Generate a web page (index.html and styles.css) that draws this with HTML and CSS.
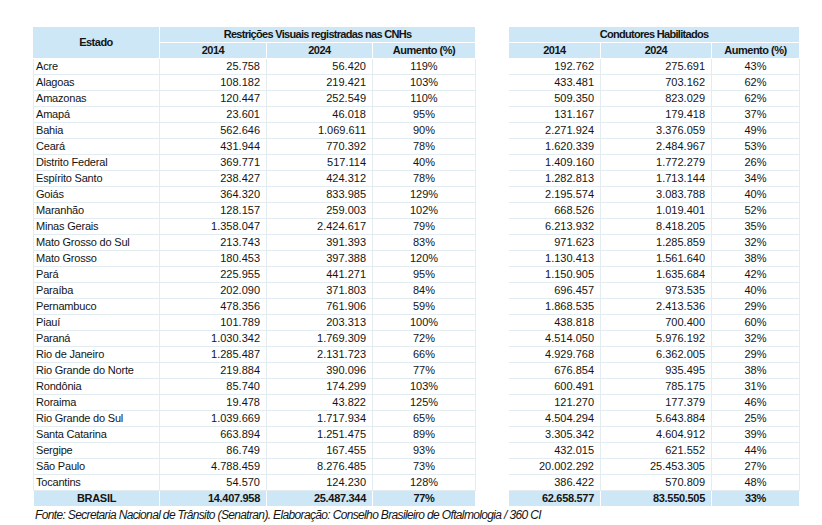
FILE: index.html
```html
<!DOCTYPE html>
<html lang="pt-BR">
<head>
<meta charset="utf-8">
<title>Restrições Visuais registradas nas CNHs</title>
<link rel="stylesheet" href="styles.css">
</head>
<body>
<div class="page">
<table class="data">
  <colgroup>
    <col class="c-estado"><col class="c-a14"><col class="c-a24"><col class="c-aum">
    <col class="c-gap">
    <col class="c-b14"><col class="c-b24"><col class="c-bum">
  </colgroup>
  <thead>
    <tr class="h1">
      <th rowspan="2" class="hd">Estado</th>
      <th colspan="3" class="hd">Restrições Visuais registradas nas CNHs</th>
      <th class="gap"></th>
      <th colspan="3" class="hd">Condutores Habilitados</th>
    </tr>
    <tr class="h2">
      <th class="hd">2014</th><th class="hd">2024</th><th class="hd">Aumento (%)</th>
      <th class="gap"></th>
      <th class="hd">2014</th><th class="hd">2024</th><th class="hd">Aumento (%)</th>
    </tr>
  </thead>
  <tbody>
    <tr><td class="st">Acre</td><td class="n">25.758</td><td class="n">56.420</td><td class="p">119%</td><td class="gap"></td><td class="n">192.762</td><td class="n">275.691</td><td class="p">43%</td></tr>
    <tr><td class="st">Alagoas</td><td class="n">108.182</td><td class="n">219.421</td><td class="p">103%</td><td class="gap"></td><td class="n">433.481</td><td class="n">703.162</td><td class="p">62%</td></tr>
    <tr><td class="st">Amazonas</td><td class="n">120.447</td><td class="n">252.549</td><td class="p">110%</td><td class="gap"></td><td class="n">509.350</td><td class="n">823.029</td><td class="p">62%</td></tr>
    <tr><td class="st">Amapá</td><td class="n">23.601</td><td class="n">46.018</td><td class="p">95%</td><td class="gap"></td><td class="n">131.167</td><td class="n">179.418</td><td class="p">37%</td></tr>
    <tr><td class="st">Bahia</td><td class="n">562.646</td><td class="n">1.069.611</td><td class="p">90%</td><td class="gap"></td><td class="n">2.271.924</td><td class="n">3.376.059</td><td class="p">49%</td></tr>
    <tr><td class="st">Ceará</td><td class="n">431.944</td><td class="n">770.392</td><td class="p">78%</td><td class="gap"></td><td class="n">1.620.339</td><td class="n">2.484.967</td><td class="p">53%</td></tr>
    <tr><td class="st">Distrito Federal</td><td class="n">369.771</td><td class="n">517.114</td><td class="p">40%</td><td class="gap"></td><td class="n">1.409.160</td><td class="n">1.772.279</td><td class="p">26%</td></tr>
    <tr><td class="st">Espírito Santo</td><td class="n">238.427</td><td class="n">424.312</td><td class="p">78%</td><td class="gap"></td><td class="n">1.282.813</td><td class="n">1.713.144</td><td class="p">34%</td></tr>
    <tr><td class="st">Goiás</td><td class="n">364.320</td><td class="n">833.985</td><td class="p">129%</td><td class="gap"></td><td class="n">2.195.574</td><td class="n">3.083.788</td><td class="p">40%</td></tr>
    <tr><td class="st">Maranhão</td><td class="n">128.157</td><td class="n">259.003</td><td class="p">102%</td><td class="gap"></td><td class="n">668.526</td><td class="n">1.019.401</td><td class="p">52%</td></tr>
    <tr><td class="st">Minas Gerais</td><td class="n">1.358.047</td><td class="n">2.424.617</td><td class="p">79%</td><td class="gap"></td><td class="n">6.213.932</td><td class="n">8.418.205</td><td class="p">35%</td></tr>
    <tr><td class="st">Mato Grosso do Sul</td><td class="n">213.743</td><td class="n">391.393</td><td class="p">83%</td><td class="gap"></td><td class="n">971.623</td><td class="n">1.285.859</td><td class="p">32%</td></tr>
    <tr><td class="st">Mato Grosso</td><td class="n">180.453</td><td class="n">397.388</td><td class="p">120%</td><td class="gap"></td><td class="n">1.130.413</td><td class="n">1.561.640</td><td class="p">38%</td></tr>
    <tr><td class="st">Pará</td><td class="n">225.955</td><td class="n">441.271</td><td class="p">95%</td><td class="gap"></td><td class="n">1.150.905</td><td class="n">1.635.684</td><td class="p">42%</td></tr>
    <tr><td class="st">Paraíba</td><td class="n">202.090</td><td class="n">371.803</td><td class="p">84%</td><td class="gap"></td><td class="n">696.457</td><td class="n">973.535</td><td class="p">40%</td></tr>
    <tr><td class="st">Pernambuco</td><td class="n">478.356</td><td class="n">761.906</td><td class="p">59%</td><td class="gap"></td><td class="n">1.868.535</td><td class="n">2.413.536</td><td class="p">29%</td></tr>
    <tr><td class="st">Piauí</td><td class="n">101.789</td><td class="n">203.313</td><td class="p">100%</td><td class="gap"></td><td class="n">438.818</td><td class="n">700.400</td><td class="p">60%</td></tr>
    <tr><td class="st">Paraná</td><td class="n">1.030.342</td><td class="n">1.769.309</td><td class="p">72%</td><td class="gap"></td><td class="n">4.514.050</td><td class="n">5.976.192</td><td class="p">32%</td></tr>
    <tr><td class="st">Rio de Janeiro</td><td class="n">1.285.487</td><td class="n">2.131.723</td><td class="p">66%</td><td class="gap"></td><td class="n">4.929.768</td><td class="n">6.362.005</td><td class="p">29%</td></tr>
    <tr><td class="st">Rio Grande do Norte</td><td class="n">219.884</td><td class="n">390.096</td><td class="p">77%</td><td class="gap"></td><td class="n">676.854</td><td class="n">935.495</td><td class="p">38%</td></tr>
    <tr><td class="st">Rondônia</td><td class="n">85.740</td><td class="n">174.299</td><td class="p">103%</td><td class="gap"></td><td class="n">600.491</td><td class="n">785.175</td><td class="p">31%</td></tr>
    <tr><td class="st">Roraima</td><td class="n">19.478</td><td class="n">43.822</td><td class="p">125%</td><td class="gap"></td><td class="n">121.270</td><td class="n">177.379</td><td class="p">46%</td></tr>
    <tr><td class="st">Rio Grande do Sul</td><td class="n">1.039.669</td><td class="n">1.717.934</td><td class="p">65%</td><td class="gap"></td><td class="n">4.504.294</td><td class="n">5.643.884</td><td class="p">25%</td></tr>
    <tr><td class="st">Santa Catarina</td><td class="n">663.894</td><td class="n">1.251.475</td><td class="p">89%</td><td class="gap"></td><td class="n">3.305.342</td><td class="n">4.604.912</td><td class="p">39%</td></tr>
    <tr><td class="st">Sergipe</td><td class="n">86.749</td><td class="n">167.455</td><td class="p">93%</td><td class="gap"></td><td class="n">432.015</td><td class="n">621.552</td><td class="p">44%</td></tr>
    <tr><td class="st">São Paulo</td><td class="n">4.788.459</td><td class="n">8.276.485</td><td class="p">73%</td><td class="gap"></td><td class="n">20.002.292</td><td class="n">25.453.305</td><td class="p">27%</td></tr>
    <tr><td class="st">Tocantins</td><td class="n">54.570</td><td class="n">124.230</td><td class="p">128%</td><td class="gap"></td><td class="n">386.422</td><td class="n">570.809</td><td class="p">48%</td></tr>
    <tr class="total"><td class="st tt">BRASIL</td><td class="n">14.407.958</td><td class="n">25.487.344</td><td class="p">77%</td><td class="gap"></td><td class="n">62.658.577</td><td class="n">83.550.505</td><td class="p">33%</td></tr>
  </tbody>
</table>
<p class="source">Fonte: Secretaria Nacional de Trânsito (Senatran). Elaboração: Conselho Brasileiro de Oftalmologia / 360 CI</p>
</div>
</body>
</html>
```
FILE: styles.css
```css
html, body {
  margin: 0;
  padding: 0;
  background: #ffffff;
}

.page {
  padding: 27px 0 0 33px;
  font-family: "Liberation Sans Narrow", "Arial Narrow", "Liberation Sans", Arial, sans-serif;
  color: #141414;
}

.data {
  border-collapse: separate;
  border-spacing: 0;
  table-layout: fixed;
  width: 767px;
  font-size: 11px;
}

.c-estado { width: 127px; }
.c-a14 { width: 107px; }
.c-a24 { width: 106px; }
.c-aum { width: 103px; }
.c-gap { width: 33px; }
.c-b14 { width: 92px; }
.c-b24 { width: 111px; }
.c-bum { width: 88px; }

.data th,
.data td {
  padding: 0;
  white-space: nowrap;
  overflow: hidden;
  line-height: 15px;
  height: 15px;
}

.hd {
  background: #cde7f6;
  font-weight: bold;
  text-align: center;
  letter-spacing: -0.5px;
  border-right: 1px solid #ffffff;
  border-bottom: 1px solid #ffffff;
}

.h1 .hd[colspan] {
  letter-spacing: -0.7px;
}

.data td {
  border-bottom: 1px solid #e2ecf1;
  border-right: 1px solid #e2ecf1;
}

.data td.gap,
.data th.gap {
  border: none;
  background: #ffffff;
}

.data td.st {
  border-left: 1px solid #e2ecf1;
  padding-left: 2px;
  text-align: left;
  letter-spacing: -0.2px;
}

.data td.n {
  text-align: right;
  padding-right: 6px;
}

.data td.p {
  text-align: center;
}

.data tr.total td {
  background: #cde7f6;
  font-weight: bold;
  border-color: #ffffff;
  letter-spacing: -0.3px;
}

.data tr.total td.gap {
  background: #ffffff;
}

.data td.tt {
  text-align: center;
  padding-left: 0;
}

.source {
  margin: 1px 0 0 2px;
  font-size: 12px;
  font-style: italic;
  letter-spacing: -0.65px;
  color: #141414;
}
```
